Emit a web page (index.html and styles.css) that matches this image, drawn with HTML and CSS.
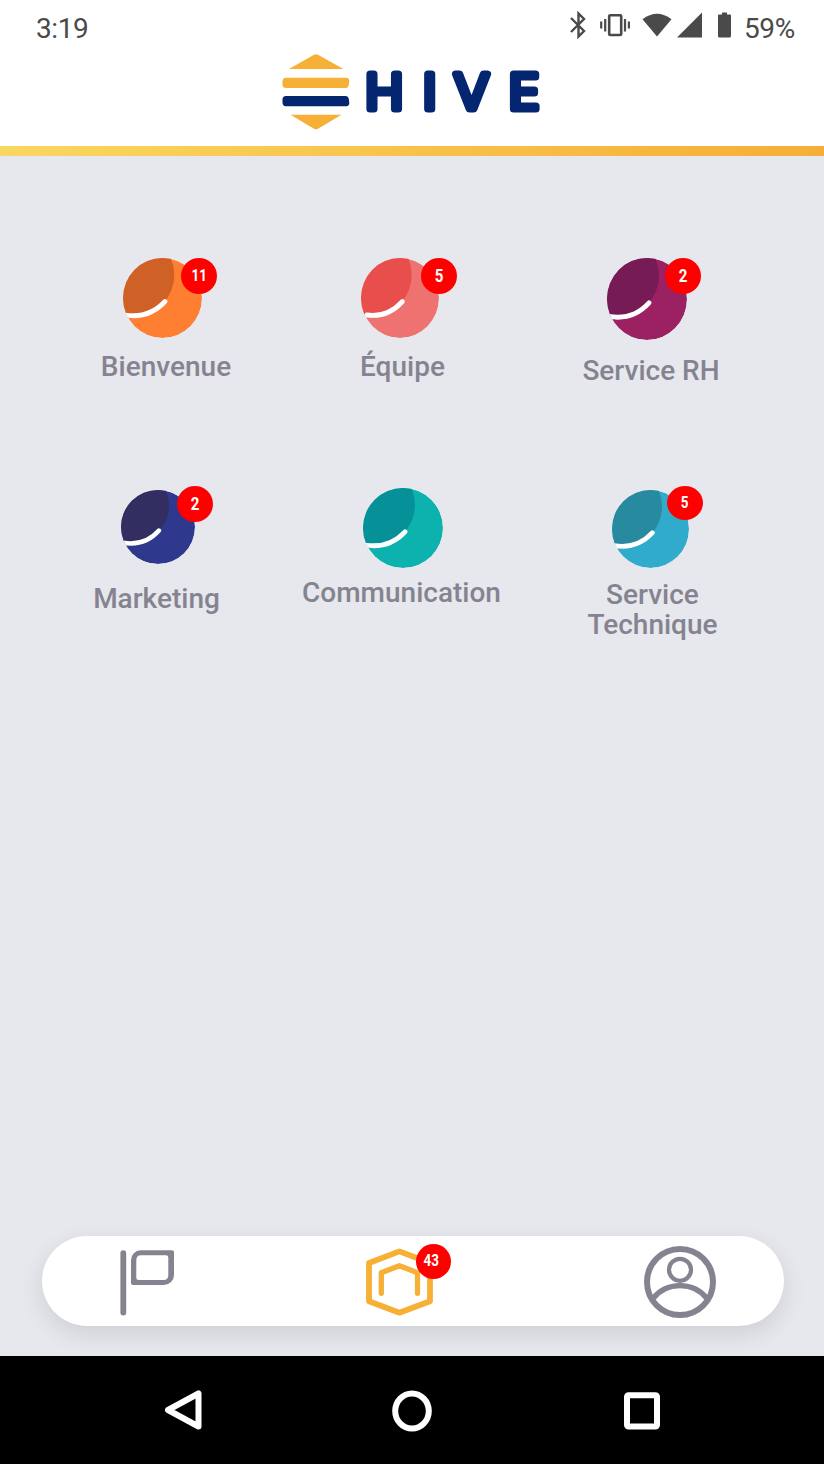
FILE: index.html
```html
<!DOCTYPE html>
<html lang="fr">
<head>
    <meta charset="UTF-8">
    <meta name="viewport" content="width=device-width, initial-scale=1.0">
    <title>Hive</title>
    <link rel="stylesheet" href="styles.css">
</head>
<body>
    <header class="header">
        <div class="status-bar">
            <span class="time">3:19</span>
            <svg class="bluetooth" width="18" height="28" viewBox="0 0 18 28"><path d="M2 7L15 20L9.5 25.5V2.5L15 8L2 21" fill="none" stroke="#4a4a4a" stroke-width="2.4"/></svg>
            <svg class="vibrate" width="30" height="24" viewBox="0 0 30 24"><rect x="9.2" y="2.2" width="12" height="19.8" rx="1" fill="none" stroke="#4a4a4a" stroke-width="2.6"/><path d="M1.2 8.5v7M5.2 6v12.5M25 6v12.5M28.9 8.5v7" stroke="#4a4a4a" stroke-width="2.2"/></svg>
            <svg class="wifi" width="30" height="24" viewBox="0 0 30 24"><path d="M0.5 6.3Q15-4.7 29.5 6.3L15 23.5Z" fill="#4a4a4a"/></svg>
            <svg class="signal" width="26" height="26" viewBox="0 0 26 26"><path d="M25 0.5V25.5H0Z" fill="#4a4a4a"/></svg>
            <svg class="battery" width="13" height="26" viewBox="0 0 13 26"><path d="M4 0.5h5v2h3q1 0 1 1V24q0 1.5-1.5 1.5h-10Q0 25.5 0 24V3.5q0-1 1-1h3Z" fill="#4a4a4a"/></svg>
            <span class="percent">59%</span>
        </div>
        <svg class="logo" width="260" height="78" viewBox="0 0 260 78">
            <g fill="#f6b036">
                <path d="M7 15L32 0.8Q34 -0.2 36 0.8L61.5 15Z"/>
                <path d="M3.5 23.7H64.3Q67.3 24 67.3 27L66.8 31Q66.3 34 63.5 34H4Q0.8 34 0.5 31V27Q0.8 24 3.5 23.7Z"/>
                <path d="M8.5 60.7H59.5L36 74.7Q34 75.8 32 74.7Z"/>
            </g>
            <path d="M4 42H63.5Q66.3 42 66.8 45L67.3 49Q67.3 52 64.3 52.3H3.5Q0.8 52 0.5 49V45Q0.8 42 4 42Z" fill="#04256f"/>
            <text class="wordmark" transform="scale(1.08 1)" x="77 130.5 159.5 210" y="55.5">HIVE</text>
        </svg>
    </header>

    <main class="services">
        <div class="tile bienvenue">
            <div class="icon">
                <svg viewBox="0 0 80 80" preserveAspectRatio="none">
                    <clipPath id="disc"><circle cx="40" cy="40" r="40"/></clipPath>
                    <g clip-path="url(#disc)"><circle class="base" cx="40" cy="40" r="40"/><circle class="shade" cx="11.5" cy="17" r="40.5"/><path class="shine" d="M2 57Q26 61 42.5 43.5"/></g>
                </svg>
                <span class="badge"><span class="count">11</span></span>
            </div>
            <div class="label">Bienvenue</div>
        </div>
        <div class="tile equipe">
            <div class="icon">
                <svg viewBox="0 0 80 80" preserveAspectRatio="none">
                    <g clip-path="url(#disc)"><circle class="base" cx="40" cy="40" r="40"/><circle class="shade" cx="11.5" cy="17" r="40.5"/><path class="shine" d="M6 57Q27 60 42.5 43.5"/></g>
                </svg>
                <span class="badge"><span class="count">5</span></span>
            </div>
            <div class="label">Équipe</div>
        </div>
        <div class="tile rh">
            <div class="icon">
                <svg viewBox="0 0 80 80" preserveAspectRatio="none">
                    <g clip-path="url(#disc)"><circle class="base" cx="40" cy="40" r="40"/><circle class="shade" cx="11.5" cy="17" r="40.5"/><path class="shine" d="M2 57Q26 61 42 43.8"/></g>
                </svg>
                <span class="badge"><span class="count">2</span></span>
            </div>
            <div class="label">Service RH</div>
        </div>
        <div class="tile marketing">
            <div class="icon">
                <svg viewBox="0 0 80 80" preserveAspectRatio="none">
                    <g clip-path="url(#disc)"><circle class="base" cx="40" cy="40" r="40"/><circle class="shade" cx="11.5" cy="17" r="40.5"/><path class="shine" d="M2 57Q26 61 41 43.8"/></g>
                </svg>
                <span class="badge"><span class="count">2</span></span>
            </div>
            <div class="label">Marketing</div>
        </div>
        <div class="tile communication">
            <div class="icon">
                <svg viewBox="0 0 80 80" preserveAspectRatio="none">
                    <g clip-path="url(#disc)"><circle class="base" cx="40" cy="40" r="40"/><circle class="shade" cx="11.5" cy="17" r="40.5"/><path class="shine" d="M2 57Q26 61 42 43.8"/></g>
                </svg>
            </div>
            <div class="label">Communication</div>
        </div>
        <div class="tile technique">
            <div class="icon">
                <svg viewBox="0 0 80 80" preserveAspectRatio="none">
                    <g clip-path="url(#disc)"><circle class="base" cx="40" cy="40" r="40"/><circle class="shade" cx="11.5" cy="17" r="40.5"/><path class="shine" d="M2 57Q26 61 42 43.8"/></g>
                </svg>
                <span class="badge"><span class="count">5</span></span>
            </div>
            <div class="label">Service<br>Technique</div>
        </div>
    </main>

    <nav class="tabs">
        <svg class="flag" width="54" height="66" viewBox="0 0 54 66">
            <path d="M3.3 3.2V62.5" stroke="#868391" stroke-width="5.8" stroke-linecap="round"/>
            <path fill="#868391" fill-rule="evenodd" d="M20.5 0.2H52Q54 0.2 54 2.2V25A10 10 0 0 1 44 35H13.5Q11 35 11 32.5V10A9.8 9.8 0 0 1 20.5 0.2ZM21 5.3Q16.3 5.3 16.3 10V27.5Q16.3 30 18.8 30H43.5Q48.3 30 48.3 25.2V7.5Q48.3 5.3 46 5.3Z"/>
        </svg>
        <div class="home">
            <svg width="68" height="68" viewBox="0 0 68 68" fill="none" stroke="#f6b036" stroke-linejoin="round">
                <path d="M33.4 3.4L64 15V53.2L33.4 64.7L3 53.2V15Z" stroke-width="5.8"/>
                <path d="M15.3 45.3V24.8L33.4 17.7L51.5 24.8V45.3" stroke-width="5.3" stroke-linecap="round"/>
            </svg>
            <span class="badge"><span class="count">43</span></span>
        </div>
        <svg class="profile" width="72" height="72" viewBox="0 0 72 72" fill="none" stroke="#868391">
            <circle cx="36" cy="36" r="33" stroke-width="6"/>
            <circle cx="36" cy="23.8" r="11" stroke-width="4.2"/>
            <path d="M8.5 53A35 35 0 0 1 63.5 53" stroke-width="5.4"/>
        </svg>
    </nav>

    <footer class="android-nav">
        <svg class="back" width="38" height="40" viewBox="0 0 38 40"><path d="M4 20L34.5 3.5V36.5Z"/></svg>
        <svg class="circle" width="40" height="42" viewBox="0 0 40 42"><ellipse cx="20" cy="21" rx="16.8" ry="17.6"/></svg>
        <svg class="square" width="36" height="38" viewBox="0 0 36 38"><rect x="3" y="3.2" width="30" height="31.4" rx="1.5"/></svg>
    </footer>
</body>
</html>
```
FILE: styles.css
```css
* {
    box-sizing: border-box;
}

body {
    margin: 0;
    height: 1464px;
    display: flex;
    flex-direction: column;
    background-color: #e6e8ed;
    font-family: Roboto, 'Liberation Sans', sans-serif;
    overflow: hidden;
}

svg {
    display: block;
    flex-shrink: 0;
}

/* Header */
.header {
    height: 156px;
    background: linear-gradient(to right, #fad75f, #f6ae36) bottom / 100% 10px no-repeat #fff;
}

.status-bar {
    height: 54px;
    padding: 0 30px 0 36px;
    display: flex;
    align-items: flex-start;
    color: #4a4a4a;
    font-size: 28px;
    line-height: 32px;
    letter-spacing: -0.4px;
}

.time,
.percent {
    padding-top: 13px;
}

.bluetooth {
    margin: 11px 13px 0 auto;
}

.vibrate {
    margin: 13px 12px 0 0;
}

.wifi {
    margin: 13px 5px 0 0;
}

.signal {
    margin: 12px 15px 0 0;
}

.battery {
    margin: 12px 13px 0 0;
}

.percent {
    width: 50px;
}

.logo {
    margin-left: 282px;
}

.wordmark {
    font-family: Inter, sans-serif;
    font-size: 47.5px;
    font-weight: 300;
    fill: #04256f;
    stroke: #04256f;
    stroke-width: 7px;
    stroke-linejoin: round;
}

/* Services */
.services {
    height: 1080px;
    padding: 102px 43px 0 48px;
    display: grid;
    grid-template-columns: 236px 237px 260px;
    grid-template-rows: 228px 200px;
}

.tile {
    display: flex;
    flex-direction: column;
    align-items: center;
}

.icon {
    position: relative;
    width: 80px;
    height: 80px;
}

.icon svg {
    width: 100%;
    height: 100%;
}

.shine {
    fill: none;
    stroke: #fff;
    stroke-width: 4.8;
    stroke-linecap: round;
}

.label {
    color: #868391;
    font-size: 28px;
    font-weight: 500;
    line-height: 30px;
    text-align: center;
    white-space: nowrap;
}

.badge {
    position: absolute;
    top: 0;
    left: 58px;
    width: 36px;
    height: 36px;
    border-radius: 50%;
    background-color: #fe0000;
    color: #fff;
    font-size: 18px;
    font-weight: 700;
    line-height: 36px;
    text-align: center;
}

.count {
    display: inline-block;
    transform: scaleX(0.84);
}

.bienvenue .icon {
    width: 79px;
    margin: 0 7px 14px 0;
}

.bienvenue .badge {
    font-size: 16px;
}

.bienvenue .base { fill: #ff7f32; }
.bienvenue .shade { fill: #cf6026; }

.equipe .icon {
    width: 78px;
    margin: 0 5px 14px 0;
}

.equipe .badge {
    left: 60px;
}

.equipe .base { fill: #ee726f; }
.equipe .shade { fill: #e84e4b; }

.rh .icon {
    height: 82px;
    margin: 0 8px 16px 0;
}

.rh .base { fill: #9b2162; }
.rh .shade { fill: #761b55; }

.marketing {
    padding: 4px 19px 0 0;
}

.marketing .icon {
    width: 74px;
    height: 74px;
    margin: 0 0 20px 3px;
}

.marketing .badge {
    top: -4px;
    left: 56px;
}

.marketing .base { fill: #2e388c; }
.marketing .shade { fill: #322e62; }

.communication {
    padding: 2px 2px 0 0;
}

.communication .icon {
    margin: 0 0 10px 3px;
}

.communication .base { fill: #0cb2ae; }
.communication .shade { fill: #069199; }

.technique {
    padding: 4px 0 0 3px;
}

.technique .icon {
    width: 77px;
    height: 78px;
    margin: 0 5px 12px 0;
}

.technique .badge {
    top: -4px;
    left: 55px;
    height: 34px;
    font-size: 16px;
    line-height: 34px;
}

.technique .base { fill: #30abcb; }
.technique .shade { fill: #278a9f; }

/* Tab bar */
.tabs {
    height: 90px;
    margin: 0 40px 30px 42px;
    padding-left: 78px;
    display: flex;
    align-items: flex-start;
    border-radius: 45px;
    background-color: #fff;
    box-shadow: 0 8px 24px rgba(0, 0, 0, 0.11);
}

.flag {
    margin-top: 14px;
}

.home {
    position: relative;
    margin: 12px 210px 0 192px;
}

.home .badge {
    top: -4px;
    left: 50px;
    width: 35px;
    height: 35px;
    padding-right: 5px;
    font-size: 16px;
    line-height: 33px;
}

.profile {
    margin-top: 10px;
}

/* Android buttons */
.android-nav {
    height: 108px;
    padding-left: 164px;
    display: flex;
    align-items: flex-start;
    background-color: #000;
}

.android-nav svg {
    fill: none;
    stroke: #fff;
    stroke-width: 6;
    stroke-linejoin: round;
}

.back {
    margin-top: 34px;
}

.circle {
    margin: 34px 192px 0 190px;
}

.square {
    margin-top: 36px;
}
```
